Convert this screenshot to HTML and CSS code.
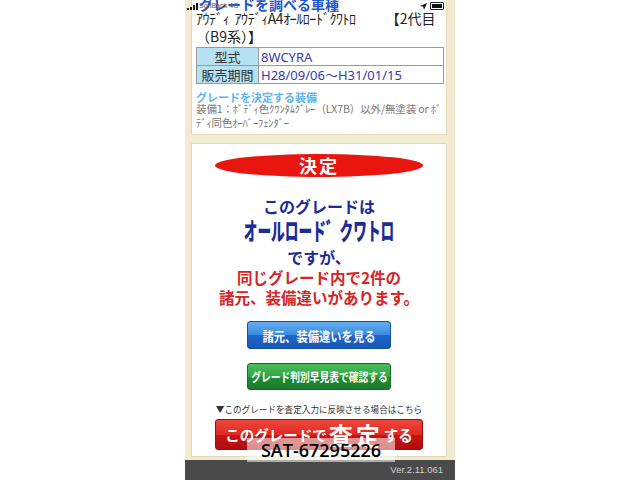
FILE: index.html
```html
<!DOCTYPE html>
<html lang="ja">
<head>
<meta charset="utf-8">
<title>グレード決定</title>
<link rel="stylesheet" href="styles.css">
</head>
<body>
<div class="phone">
  <div class="status">
    <span class="signal"><i class="b1"></i><i class="b2"></i><i class="b3"></i><i class="b4"></i></span>
    <span class="carrier">SoftBank 4G</span>
    <span class="status-right">
      <svg class="loc" width="7" height="7" viewBox="0 0 7 7"><path d="M7 0 L0 3 L3.2 3.8 L4 7 Z" fill="#111"/></svg>
      <span class="battery"><span class="level"></span></span>
    </span>
  </div>

  <section class="card info">
    <h1 class="title">グレードを調べる車種</h1>
    <p class="car"><span class="kana">ｱｳﾃﾞｨ&nbsp; ｱｳﾃﾞｨA4ｵｰﾙﾛｰﾄﾞｸﾜﾄﾛ</span><span class="gen">【2代目</span><br>（B9系）】</p>
    <table class="spec">
      <tr><th>型式</th><td>8WCYRA</td></tr>
      <tr><th>販売期間</th><td>H28/09/06～H31/01/15</td></tr>
    </table>
    <h2 class="equip-head">グレードを決定する装備</h2>
    <p class="equip">装備1：ﾎﾞﾃﾞｨ色ｸﾜﾝﾀﾑｸﾞﾚｰ（LX7B）以外/無塗装 or ﾎﾞﾃﾞｨ同色ｵｰﾊﾞｰﾌｪﾝﾀﾞｰ</p>
  </section>

  <section class="card result">
    <div class="badge">決定</div>
    <p class="msg blue">このグレードは</p>
    <div class="grade"><span>オールロード゛クワトロ</span></div>
    <p class="msg blue desu">ですが、</p>
    <p class="msg red">同じグレード内で2件の<br>諸元、装備違いがあります。</p>
    <div class="btn btn-blue"><span>諸元、装備違いを見る</span></div>
    <div class="btn btn-green"><span>グレード判別早見表で確認する</span></div>
    <p class="note">▼このグレードを査定入力に反映させる場合はこちら</p>
    <div class="btn-satei"><span class="s">このグレードで</span><span class="l">査定</span><span class="s">する</span></div>
  </section>

  <footer class="footer">Ver.2.11.061</footer>

  <div class="watermark">SAT-67295226</div>
</div>
</body>
</html>
```

FILE: styles.css
```css
html, body {
  margin: 0;
  padding: 0;
  background: #ffffff;
}
body {
  font-family: "Noto Sans CJK JP", "Noto Sans", sans-serif;
}
.phone {
  position: relative;
  width: 270px;
  height: 480px;
  margin: 0 auto;
  background: #f2ebcf;
  overflow: hidden;
  display: flex;
  flex-direction: column;
}
.status {
  position: absolute;
  top: 0;
  left: 0;
  right: 0;
  height: 12px;
  z-index: 2;
}
.signal {
  position: absolute;
  left: 2px;
  top: 3px;
  display: flex;
  align-items: flex-end;
  gap: 1px;
  height: 7px;
}
.signal i {
  display: block;
  width: 2px;
  background: #111;
}
.signal .b1 { height: 2px; }
.signal .b2 { height: 3px; }
.signal .b3 { height: 5px; }
.signal .b4 { height: 7px; }
.carrier {
  position: absolute;
  left: 14px;
  top: 1px;
  font-family: "Liberation Sans", sans-serif;
  font-size: 7px;
  line-height: 10px;
  color: #555;
}
.status-right {
  position: absolute;
  right: 11px;
  top: 2px;
  display: flex;
  align-items: center;
  gap: 3px;
}
.battery {
  display: block;
  width: 12px;
  height: 6px;
  border: 1px solid #222;
  border-radius: 1px;
  position: relative;
}
.battery .level {
  position: absolute;
  left: 1px;
  top: 1px;
  right: 1px;
  bottom: 1px;
  background: #111;
}

.card {
  background: #ffffff;
  border: 1px solid #e2d9b9;
  margin: 0 8px 0 6px;
}
.info {
  margin-top: -7px;
  padding: 1px 3px 4px 4px;
}
.title {
  margin: 2px 0 -2px 3px;
  font-size: 14px;
  line-height: 14px;
  font-weight: 700;
  color: #1f55c8;
}
.car {
  margin: 0;
  font-size: 14px;
  line-height: 18px;
  color: #222;
  white-space: nowrap;
}
.car .kana {
  letter-spacing: -0.45px;
}
.car .gen {
  margin-left: 30px;
}
.spec {
  margin-top: 2px;
  width: 248px;
  border-collapse: collapse;
  font-size: 13px;
  line-height: 16px;
}
.spec th, .spec td {
  border: 1px solid #9a9a9a;
  padding: 0 2px;
  height: 17px;
  font-weight: 400;
}
.spec th {
  width: 57px;
  background: #b6e2f4;
  color: #333;
  text-align: center;
}
.spec td {
  color: #3a3aa8;
  text-align: left;
  font-family: "Noto Sans", "Noto Sans CJK JP", sans-serif;
}
.equip-head {
  margin: 8px 0 0;
  font-size: 11px;
  line-height: 11px;
  font-weight: 700;
  color: #62b3e8;
}
.equip {
  margin: -1px 0 0;
  font-size: 10.5px;
  line-height: 14px;
  color: #777;
  letter-spacing: -0.12px;
}

.result {
  margin-top: 8px;
  padding: 10px 0 6px;
  display: flex;
  flex-direction: column;
  align-items: center;
}
.badge {
  width: 208px;
  height: 23px;
  border-radius: 50%;
  background: #e8160f;
  color: #fff;
  font-weight: 700;
  font-size: 18px;
  line-height: 23px;
  text-align: center;
  letter-spacing: 2px;
}
.msg {
  margin: 0;
  text-align: center;
  font-weight: 700;
}
.blue {
  color: #1b2b98;
  font-size: 16px;
  line-height: 20px;
  margin-top: 19px;
}
.grade {
  display: flex;
  justify-content: center;
  width: 100%;
  height: 28px;
  white-space: nowrap;
}
.grade span {
  display: block;
  font-size: 24px;
  line-height: 28px;
  font-weight: 900;
  color: #1b2b98;
  transform: scaleX(0.57);
}
.desu {
  margin-top: 4px;
  line-height: 19px;
}
.red {
  color: #d52424;
  font-size: 15.5px;
  line-height: 20px;
}
.btn {
  width: 144px;
  height: 28px;
  border-radius: 3px;
  color: #fff;
  font-weight: 700;
  display: flex;
  align-items: center;
  justify-content: center;
  white-space: nowrap;
  box-sizing: border-box;
}
.btn span {
  display: block;
}
.btn-blue {
  margin-top: 14px;
  background: linear-gradient(#64aef0, #3b8ae0 50%, #1d66cc 51%, #1858b8);
  border: 1px solid #1a4f9e;
  font-size: 13px;
}
.btn-blue span {
  transform: scaleX(0.87);
}
.btn-green {
  margin-top: 14px;
  height: 27px;
  background: linear-gradient(#48bd5a, #2fa545 50%, #1f8e34 51%, #1b7c2d);
  border: 1px solid #176b28;
  font-size: 12.5px;
}
.btn-green span {
  transform: scaleX(0.78);
}
.note {
  margin: 14px 0 0;
  font-size: 8.6px;
  line-height: 10px;
  color: #333;
  white-space: nowrap;
}
.btn-satei {
  margin-top: 5px;
  width: 208px;
  height: 31px;
  box-sizing: border-box;
  border-radius: 3px;
  border: 1px solid #9e0c0c;
  background: linear-gradient(#f0473e, #de2a22 50%, #c81414 51%, #b00d0d);
  color: #fff;
  font-weight: 700;
  display: flex;
  align-items: center;
  justify-content: center;
  white-space: nowrap;
}
.btn-satei .s {
  font-size: 14.5px;
}
.btn-satei .l {
  font-size: 24px;
  line-height: 28px;
  letter-spacing: 3px;
  margin: 0 1px 0 2px;
}

.footer {
  margin-top: auto;
  height: 20px;
  background: #4a4a4a;
  color: #cfcfcf;
  font-family: "Liberation Sans", sans-serif;
  font-size: 9.5px;
  line-height: 20px;
  text-align: right;
  padding-right: 12px;
}
.watermark {
  position: absolute;
  left: 62px;
  top: 438px;
  width: 148px;
  height: 24px;
  background: rgba(255, 255, 255, 0.55);
  font-family: "Open Sans", sans-serif;
  font-weight: 600;
  font-size: 18px;
  line-height: 24px;
  color: #000;
  text-align: center;
  z-index: 3;
}
```
